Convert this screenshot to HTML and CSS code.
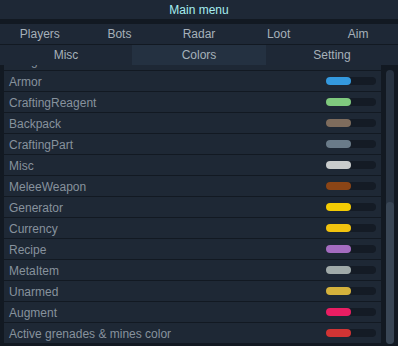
FILE: index.html
```html
<!DOCTYPE html>
<html>
<head>
<meta charset="utf-8">
<link rel="stylesheet" href="styles.css">
</head>
<body>
<div class="window">
  <div class="title">Main menu</div>
  <div class="tabs tabs-main">
    <div class="tab">Players</div>
    <div class="tab">Bots</div>
    <div class="tab">Radar</div>
    <div class="tab">Loot</div>
    <div class="tab">Aim</div>
  </div>
  <div class="tabs tabs-sub">
    <div class="tab">Misc</div>
    <div class="tab active">Colors</div>
    <div class="tab">Setting</div>
  </div>
  <div class="content">
    <div class="list">
      <div class="row partial"><span class="label">Ranged</span><span class="swatch"><span class="fill" style="background:#8a8f96"></span></span></div>
      <div class="row"><span class="label">Armor</span><span class="swatch"><span class="fill" style="background:#3499de"></span></span></div>
      <div class="row"><span class="label">CraftingReagent</span><span class="swatch"><span class="fill" style="background:#7fca7e"></span></span></div>
      <div class="row"><span class="label">Backpack</span><span class="swatch"><span class="fill" style="background:#7e6c5d"></span></span></div>
      <div class="row"><span class="label">CraftingPart</span><span class="swatch"><span class="fill" style="background:#6a7b89"></span></span></div>
      <div class="row"><span class="label">Misc</span><span class="swatch"><span class="fill" style="background:#c9cccc"></span></span></div>
      <div class="row"><span class="label">MeleeWeapon</span><span class="swatch"><span class="fill" style="background:#8b4516"></span></span></div>
      <div class="row"><span class="label">Generator</span><span class="swatch"><span class="fill" style="background:#f4cc04"></span></span></div>
      <div class="row"><span class="label">Currency</span><span class="swatch"><span class="fill" style="background:#f1c30f"></span></span></div>
      <div class="row"><span class="label">Recipe</span><span class="swatch"><span class="fill" style="background:#a46cc0"></span></span></div>
      <div class="row"><span class="label">MetaItem</span><span class="swatch"><span class="fill" style="background:#a0aaa9"></span></span></div>
      <div class="row"><span class="label">Unarmed</span><span class="swatch"><span class="fill" style="background:#d5b23c"></span></span></div>
      <div class="row"><span class="label">Augment</span><span class="swatch"><span class="fill" style="background:#e91e63"></span></span></div>
      <div class="row"><span class="label">Active grenades &amp; mines color</span><span class="swatch"><span class="fill" style="background:#d13434"></span></span></div>
    </div>
    <div class="scrollbar"><div class="thumb"></div></div>
  </div>
</div>
</body>
</html>
```
FILE: styles.css
```css
html, body {
  margin: 0;
  padding: 0;
  background: #121922;
}
body {
  font-family: "Liberation Sans", Arial, sans-serif;
  font-size: 12px;
}
.window {
  width: 398px;
  height: 346px;
  display: flex;
  flex-direction: column;
  overflow: hidden;
  background: #121922;
}
.title {
  height: 19px;
  line-height: 20px;
  text-align: center;
  color: #a6eef0;
  background: #1e2836;
  margin-bottom: 5px;
}
.tabs {
  display: grid;
  height: 20px;
  background: #1e2836;
}
.tabs-main {
  grid-template-columns: repeat(5, 1fr);
  margin-bottom: 1px;
}
.tabs-sub {
  grid-template-columns: 132px 134px 1fr;
}
.tab {
  line-height: 21px;
  text-align: center;
  color: #a6b1ba;
}
.tab.active {
  background: #243141;
}
.content {
  flex: 1;
  display: flex;
  min-height: 0;
  padding: 0 4px 0 4px;
  gap: 5px;
}
.list {
  flex: 1;
  display: flex;
  flex-direction: column;
  gap: 1px;
  overflow: hidden;
}
.row {
  flex: none;
  height: 20px;
  display: flex;
  align-items: center;
  justify-content: space-between;
  padding: 0 5px 0 5px;
  background: #1e2835;
  color: #87929d;
}
.row.partial {
  margin-top: -15px;
}
.label {
  line-height: 20px;
  padding-top: 1px;
}
.swatch {
  width: 50px;
  height: 8px;
  border-radius: 4px;
  background: #141b25;
  display: flex;
}
.fill {
  width: 25px;
  height: 8px;
  border-radius: 4px;
}
.scrollbar {
  width: 8px;
  margin-top: 5px;
  margin-bottom: 2px;
  border-radius: 4px;
  background: #283341;
  display: flex;
  flex-direction: column;
  justify-content: flex-end;
}
.thumb {
  height: 142px;
  border-radius: 4px;
  background: #394655;
}
```
